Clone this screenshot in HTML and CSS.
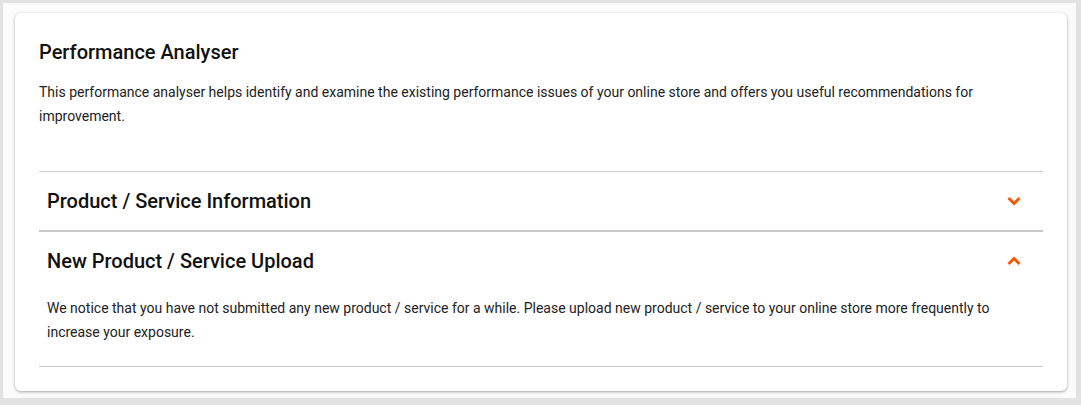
FILE: index.html
```html
<!DOCTYPE html>
<html>
<head>
<meta charset="utf-8">
<link rel="stylesheet" href="styles.css">
</head>
<body>
<div class="frame">
  <div class="card">
    <h1 class="title">Performance Analyser</h1>
    <p class="desc">This performance analyser helps identify and examine the existing performance issues of your online store and offers you useful recommendations for improvement.</p>
    <div class="accordion">
      <div class="item">
        <div class="head">
          <span class="head-text">Product / Service Information</span>
          <svg class="chev" width="16" height="10" viewBox="0 0 16 10"><path d="M2.5 2 L8 7.5 L13.5 2" fill="none" stroke="#ff5500" stroke-width="2.8"/></svg>
        </div>
      </div>
      <div class="item open">
        <div class="head">
          <span class="head-text">New Product / Service Upload</span>
          <svg class="chev" width="16" height="10" viewBox="0 0 16 10"><path d="M2.5 8 L8 2.5 L13.5 8" fill="none" stroke="#ff5500" stroke-width="2.8"/></svg>
        </div>
        <p class="body">We notice that you have not submitted any new product / service for a while. Please upload new product / service to your online store more frequently to increase your exposure.</p>
      </div>
    </div>
  </div>
</div>
</body>
</html>
```
FILE: styles.css
```css
html, body {
  margin: 0;
  padding: 0;
  background: #e2e2e2;
  font-family: Roboto, "Liberation Sans", sans-serif;
  color: #1a1a1a;
}
.frame {
  margin: 3px 5px 0 3px;
  height: 395px;
  background: #fbfbfb;
  padding: 10px 9px 0 12px;
  box-sizing: border-box;
}
.card {
  background: #fff;
  border-radius: 6px;
  box-shadow: 0 1px 3px rgba(0,0,0,0.35);
  padding: 27px 24px 24px 24px;
  height: 378px;
  box-sizing: border-box;
}
.title {
  margin: 0;
  font-size: 20px;
  line-height: 24px;
  font-weight: 500;
  color: #111;
}
.desc {
  margin: 16px 0 0 0;
  font-size: 14px;
  line-height: 24px;
  color: #222;
}
.accordion {
  margin-top: 43px;
  border-top: 1px solid #cccccc;
}
.item {
  border-bottom: 1px solid #c8c8c8;
}
.item:first-child {
  border-bottom: 2px solid #c8c8c8;
}
.head {
  display: flex;
  align-items: center;
  justify-content: space-between;
  height: 58px;
  padding: 0 21px 0 8px;
}
.head-text {
  font-size: 20px;
  font-weight: 500;
  color: #111;
}
.chev {
  display: block;
}
.body {
  margin: 0;
  padding: 6px 8px 22px 8px;
  font-size: 14px;
  line-height: 24px;
  color: #222;
}
```
